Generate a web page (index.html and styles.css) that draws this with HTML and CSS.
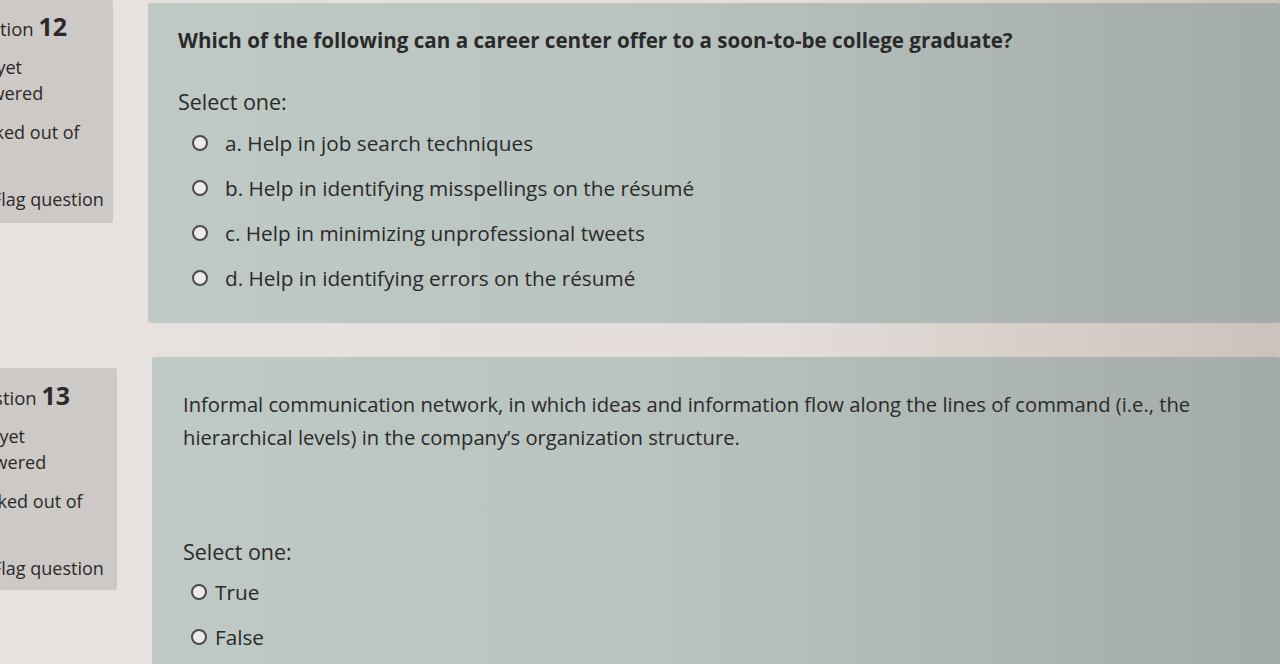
FILE: index.html
```html
<!DOCTYPE html>
<html>
<head>
<meta charset="utf-8">
<link rel="stylesheet" href="styles.css">
</head>
<body>
<div class="page">
  <div class="que que12">
    <div class="info">
      <h3 class="qno">Question <span class="num">12</span></h3>
      <div class="state">Not yet<br>answered</div>
      <div class="grade">Marked out of<br>1.00</div>
      <div class="flag"><span class="flagicon">⚑</span>Flag question</div>
    </div>
    <div class="content">
      <p class="qtext bold">Which of the following can a career center offer to a soon-to-be college graduate?</p>
      <p class="prompt">Select one:</p>
      <ul class="answers">
        <li><span class="radio"></span>a. Help in job search techniques</li>
        <li><span class="radio"></span>b. Help in identifying misspellings on the résumé</li>
        <li><span class="radio"></span>c. Help in minimizing unprofessional tweets</li>
        <li><span class="radio"></span>d. Help in identifying errors on the résumé</li>
      </ul>
    </div>
  </div>
  <div class="que que13">
    <div class="info">
      <h3 class="qno">Question <span class="num">13</span></h3>
      <div class="state">Not yet<br>answered</div>
      <div class="grade">Marked out of<br>1.00</div>
      <div class="flag"><span class="flagicon">⚑</span>Flag question</div>
    </div>
    <div class="content">
      <p class="qtext">Informal communication network, in which ideas and information flow along the lines of command (i.e., the<br>hierarchical levels) in the company’s organization structure.</p>
      <p class="prompt">Select one:</p>
      <ul class="answers tf">
        <li><span class="radio"></span>True</li>
        <li><span class="radio"></span>False</li>
      </ul>
    </div>
  </div>
</div>
</body>
</html>
```
FILE: styles.css
```css
html, body {
  margin: 0;
  padding: 0;
}
body {
  background: linear-gradient(90deg, #e8e3e0 0%, #e4ddd9 60%, #cdc2bd 100%);
  font-family: "Open Sans", "Noto Sans", sans-serif;
  color: #2a2a2a;
  width: 1280px;
  height: 664px;
  overflow: hidden;
}
.page {
  display: flex;
  flex-direction: column;
  gap: 34px;
}
.que {
  display: flex;
  align-items: flex-start;
}
.info {
  background: #cdc9c6;
  margin-left: -60px;
  width: 173px;
  box-sizing: border-box;
  padding: 11px 0 0 15px;
  font-size: 18px;
  line-height: 26px;
  border-radius: 2px;
}
.que12 .info {
  height: 223px;
}
.que13 .info {
  margin-top: 11px;
  width: 177px;
  height: 222px;
  padding-top: 12px;
  padding-left: 18px;
}
.qno {
  margin: 0 0 10px;
  font-weight: 400;
  font-size: 18.5px;
  line-height: 30px;
}
.qno .num {
  font-weight: 700;
  font-size: 25px;
}
.state {
  margin-bottom: 13px;
  margin-left: 6px;
}
.grade {
  margin-bottom: 15px;
  margin-left: 6px;
}
.flag {
  margin-left: 20px;
}
.que13 .flag {
  margin-left: 17px;
}
.flagicon {
  display: inline-block;
  width: 17px;
  color: #2a2a2a;
}
.content {
  flex: 1;
  background: linear-gradient(90deg, #bfc9c5 0%, #b9c3bf 45%, #a2aba7 100%);
  border-radius: 3px;
}
.que12 .content {
  margin-left: 35px;
  margin-top: 3px;
  height: 320px;
  padding: 22px 0 0 30px;
  box-sizing: border-box;
}
.que13 .content {
  margin-left: 35px;
  height: 320px;
  padding: 31px 0 0 31px;
  box-sizing: border-box;
}
p {
  margin: 0;
}
.qtext {
  font-size: 20.2px;
  line-height: 33px;
}
.qtext.bold {
  font-weight: 700;
  font-size: 20.6px;
  line-height: 30px;
}
.prompt {
  font-size: 21.5px;
  line-height: 30px;
}
.que12 .prompt {
  margin-top: 32px;
}
.que13 .prompt {
  margin-top: 83px;
}
.answers {
  list-style: none;
  margin: 0;
  padding: 0 0 0 14px;
  font-size: 20.75px;
}
.answers li {
  display: flex;
  align-items: center;
  height: 45px;
  gap: 17px;
}
.que12 .answers {
  margin-top: 3px;
}
.answers.tf {
  padding-left: 8px;
  margin-top: 2px;
}
.answers.tf li {
  gap: 8px;
}
.radio {
  display: inline-block;
  width: 12px;
  height: 12px;
  border: 2.5px solid #4a4a4a;
  border-radius: 50%;
  background: #eeeaea;
}
```
